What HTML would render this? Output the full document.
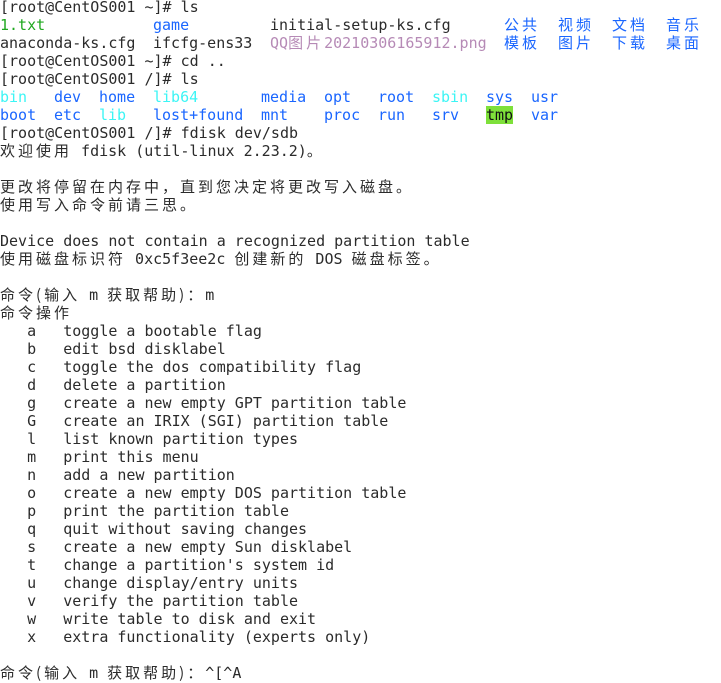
<!DOCTYPE html>
<html><head><meta charset="utf-8"><style>
html,body{margin:0;padding:0;background:#fff;width:721px;height:683px;overflow:hidden}
#t{position:absolute;left:0;top:-2px;font-family:"DejaVu Sans Mono","Liberation Mono",monospace;font-size:15px;line-height:18px;color:#2b2b2b}
.l{position:relative;height:18px;white-space:pre}
.c{font-family:"Noto Sans CJK SC","WenQuanYi Zen Hei",sans-serif;letter-spacing:3px;font-size:15px}
.a{position:absolute;top:0}
.b{color:#1a66ff}.y{color:#3cf5f5}.g{color:#1fa81f}.p{color:#b68ab6}
.h{background:#7ee03a;color:#111}
</style></head><body><div id="t"><div class="l">[root@CentOS001 ~]# ls</div><div class="l"><span class="a g" style="left:0">1.txt</span><span class="a b" style="left:153px">game</span><span class="a" style="left:270px">initial-setup-ks.cfg</span><span class="a b c" style="left:504px">公共</span><span class="a b c" style="left:558px">视频</span><span class="a b c" style="left:612px">文档</span><span class="a b c" style="left:666px">音乐</span></div><div class="l"><span class="a" style="left:0">anaconda-ks.cfg</span><span class="a" style="left:153px">ifcfg-ens33</span><span class="a p" style="left:270px">QQ<span class="c">图片</span>20210306165912.png</span><span class="a b c" style="left:504px">模板</span><span class="a b c" style="left:558px">图片</span><span class="a b c" style="left:612px">下载</span><span class="a b c" style="left:666px">桌面</span></div><div class="l">[root@CentOS001 ~]# cd ..</div><div class="l">[root@CentOS001 /]# ls</div><div class="l"><span class="a y" style="left:0">bin</span><span class="a b" style="left:54px">dev</span><span class="a b" style="left:99px">home</span><span class="a y" style="left:153px">lib64</span><span class="a b" style="left:261px">media</span><span class="a b" style="left:324px">opt</span><span class="a b" style="left:378px">root</span><span class="a y" style="left:432px">sbin</span><span class="a b" style="left:486px">sys</span><span class="a b" style="left:531px">usr</span></div><div class="l"><span class="a b" style="left:0">boot</span><span class="a b" style="left:54px">etc</span><span class="a y" style="left:99px">lib</span><span class="a b" style="left:153px">lost+found</span><span class="a b" style="left:261px">mnt</span><span class="a b" style="left:324px">proc</span><span class="a b" style="left:378px">run</span><span class="a b" style="left:432px">srv</span><span class="a h" style="left:486px">tmp</span><span class="a b" style="left:531px">var</span></div><div class="l">[root@CentOS001 /]# fdisk dev/sdb</div><div class="l"><span class="c">欢迎使用</span> fdisk (util-linux 2.23.2)<span class="c">。</span></div><div class="l"></div><div class="l"><span class="c">更改将停留在内存中，直到您决定将更改写入磁盘。</span></div><div class="l"><span class="c">使用写入命令前请三思。</span></div><div class="l"></div><div class="l">Device does not contain a recognized partition table</div><div class="l"><span class="c">使用磁盘标识符</span> 0xc5f3ee2c <span class="c">创建新的</span> DOS <span class="c">磁盘标签。</span></div><div class="l"></div><div class="l"><span class="c">命令(输入</span> m <span class="c">获取帮助)：</span>m</div><div class="l"><span class="c">命令操作</span></div><div class="l">   a   toggle a bootable flag</div><div class="l">   b   edit bsd disklabel</div><div class="l">   c   toggle the dos compatibility flag</div><div class="l">   d   delete a partition</div><div class="l">   g   create a new empty GPT partition table</div><div class="l">   G   create an IRIX (SGI) partition table</div><div class="l">   l   list known partition types</div><div class="l">   m   print this menu</div><div class="l">   n   add a new partition</div><div class="l">   o   create a new empty DOS partition table</div><div class="l">   p   print the partition table</div><div class="l">   q   quit without saving changes</div><div class="l">   s   create a new empty Sun disklabel</div><div class="l">   t   change a partition's system id</div><div class="l">   u   change display/entry units</div><div class="l">   v   verify the partition table</div><div class="l">   w   write table to disk and exit</div><div class="l">   x   extra functionality (experts only)</div><div class="l"></div><div class="l"><span class="c">命令(输入</span> m <span class="c">获取帮助)：</span>^[^A</div></div></body></html>
